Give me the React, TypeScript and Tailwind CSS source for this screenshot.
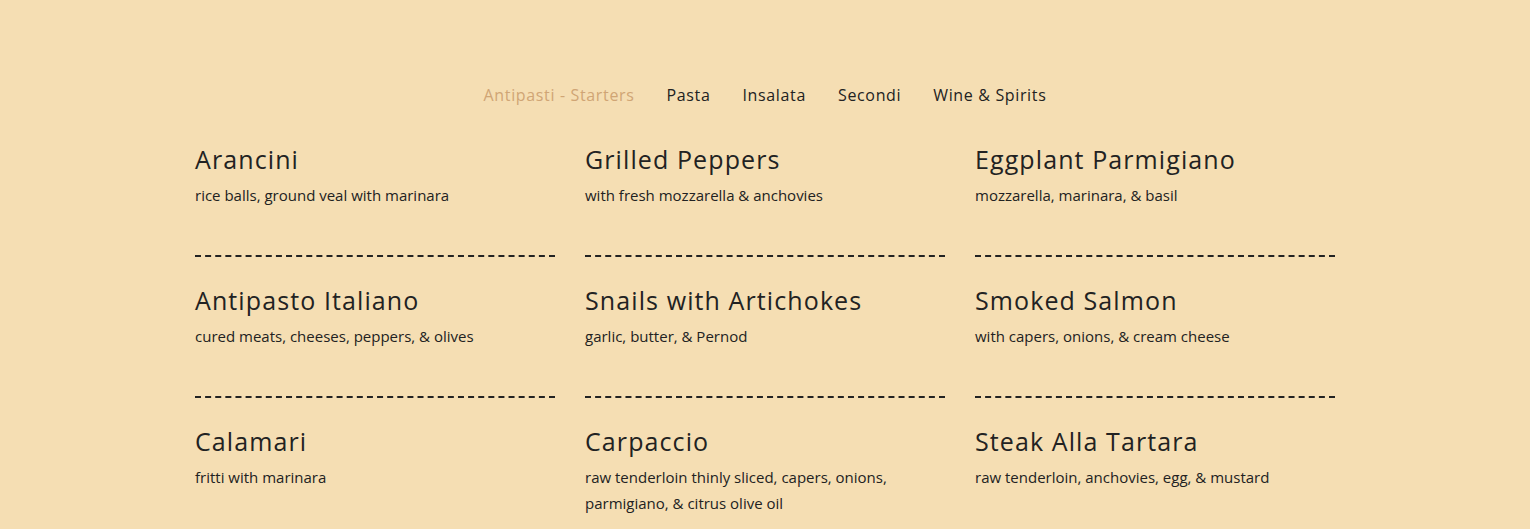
const tabs = ["Antipasti - Starters", "Pasta", "Insalata", "Secondi", "Wine & Spirits"];

const items = [
  { name: "Arancini", desc: "rice balls, ground veal with marinara" },
  { name: "Grilled Peppers", desc: "with fresh mozzarella & anchovies" },
  { name: "Eggplant Parmigiano", desc: "mozzarella, marinara, & basil" },
  { name: "Antipasto Italiano", desc: "cured meats, cheeses, peppers, & olives" },
  { name: "Snails with Artichokes", desc: "garlic, butter, & Pernod" },
  { name: "Smoked Salmon", desc: "with capers, onions, & cream cheese" },
  { name: "Calamari", desc: "fritti with marinara" },
  { name: "Carpaccio", desc: "raw tenderloin thinly sliced, capers, onions, parmigiano, & citrus olive oil" },
  { name: "Steak Alla Tartara", desc: "raw tenderloin, anchovies, egg, & mustard" },
];

const App = () => {
  return (
    <section className="w-full min-h-[529px] bg-[#f5deb3] text-[#222] font-['Open_Sans',sans-serif] pt-[83px]">
      <ul className="flex justify-center gap-8 mb-[38px]">
        {tabs.map((tab, index) => (
          <li
            key={tab}
            className={`text-[16px] leading-6 tracking-[0.65px] ${index === 0 ? "text-[#d0a575]" : "text-[#222]"}`}
          >
            {tab}
          </li>
        ))}
      </ul>
      <div className="w-[1140px] mx-auto grid grid-cols-3 gap-x-[30px] gap-y-[29px]">
        {items.map((item) => (
          <div key={item.name} className="border-b-2 border-dashed border-[#222] pb-[47px]">
            <h3 className="text-[25px] leading-[29px] font-medium tracking-[1.1px]">{item.name}</h3>
            <p className="mt-2 text-[15px] leading-[26px]">{item.desc}</p>
          </div>
        ))}
      </div>
    </section>
  );
};

export default App;
